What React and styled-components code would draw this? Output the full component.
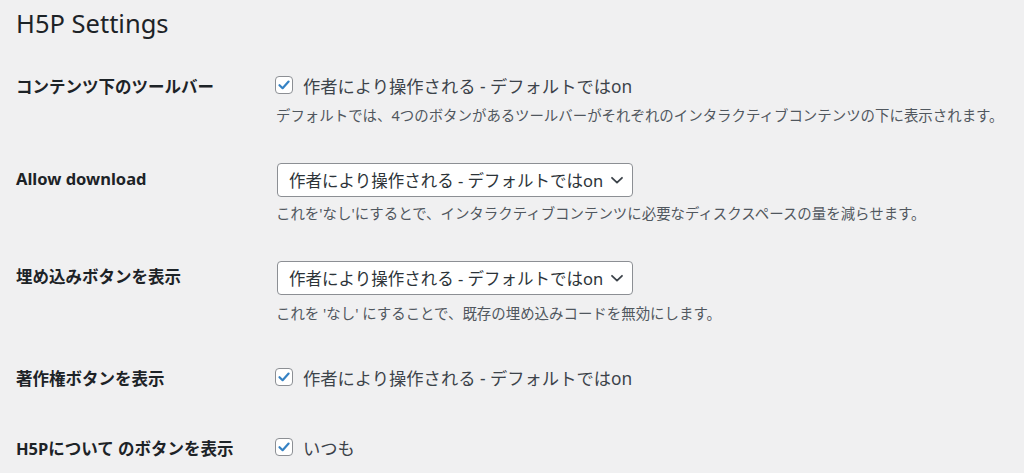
import React from 'react'
import styled, { createGlobalStyle } from 'styled-components'

const GlobalStyle = createGlobalStyle`
  body {
    margin: 0;
    background: #f0f0f1;
    font-family: "Noto Sans", "Noto Sans CJK JP", sans-serif;
    color: #3c434a;
  }
`

const Page = styled.div`
  padding: 0 16px;
`

const Title = styled.h1`
  margin: 6px 0 12px;
  font-size: 25.5px;
  line-height: 34px;
  font-weight: 400;
  color: #1d2327;
`

const Row = styled.div`
  display: grid;
  grid-template-columns: 260px 1fr;
  align-items: start;
  margin-top: ${(p) => p.$shift || 0}px;
`

const Label = styled.div`
  padding: 24px 0;
  font-size: 16.5px;
  line-height: 22px;
  font-weight: 700;
  color: #1d2327;
`

const Field = styled.div`
  padding: 19px 0 18px;
`

const CheckLine = styled.label`
  display: flex;
  align-items: center;
  gap: 10px;
  height: 28px;
  font-size: 17.3px;
  color: #3c434a;
`

const Box = styled.span`
  display: flex;
  align-items: center;
  justify-content: center;
  width: 18px;
  height: 18px;
  box-sizing: border-box;
  border: 1px solid #8c8f94;
  border-radius: 4px;
  background: #fff;
  margin-left: -1px;

  svg {
    width: 14px;
    height: 14px;
  }
`

const Select = styled.div`
  display: flex;
  align-items: center;
  justify-content: space-between;
  box-sizing: border-box;
  width: 356px;
  height: 34px;
  margin-left: 1px;
  padding: 0 8px 0 11px;
  border: 1px solid #8c8f94;
  border-radius: 4px;
  background: #fff;
  font-size: 16.5px;
  color: #2c3338;

  svg {
    width: 14px;
    height: 14px;
  }
`

const Description = styled.p`
  margin: ${(p) => p.$gap || 7}px 0 0;
  font-size: 14.45px;
  line-height: 20px;
  color: #50575e;
`

const OPTION = '作者により操作される - デフォルトではon'

const Checkbox = ({ children }) => (
  <CheckLine>
    <Box>
      <svg viewBox="0 0 14 14" fill="none">
        <path
          d="M2.5 7.2 L5.6 10.2 L11.6 3.6"
          stroke="#3582c4"
          strokeWidth="2.2"
          strokeLinecap="round"
          strokeLinejoin="round"
        />
      </svg>
    </Box>
    {children}
  </CheckLine>
)

const Dropdown = ({ children }) => (
  <Select>
    <span>{children}</span>
    <svg viewBox="0 0 14 14" fill="none">
      <path
        d="M2 4.8 L7 9.6 L12 4.8"
        stroke="#3c434a"
        strokeWidth="1.8"
        strokeLinecap="round"
        strokeLinejoin="round"
      />
    </svg>
  </Select>
)

const App = () => (
  <Page>
    <GlobalStyle />
    <Title>H5P Settings</Title>

    <Row>
      <Label>コンテンツ下のツールバー</Label>
      <Field>
        <Checkbox>{OPTION}</Checkbox>
        <Description>
          デフォルトでは、4つのボタンがあるツールバーがそれぞれのインタラクティブコンテンツの下に表示されます。
        </Description>
      </Field>
    </Row>

    <Row>
      <Label>Allow download</Label>
      <Field>
        <Dropdown>{OPTION}</Dropdown>
        <Description>
          これを'なし'にするとで、インタラクティブコンテンツに必要なディスクスペースの量を減らせます。
        </Description>
      </Field>
    </Row>

    <Row>
      <Label>埋め込みボタンを表示</Label>
      <Field>
        <Dropdown>{OPTION}</Dropdown>
        <Description $gap={9}>
          これを 'なし' にすることで、既存の埋め込みコードを無効にします。
        </Description>
      </Field>
    </Row>

    <Row $shift={2}>
      <Label>著作権ボタンを表示</Label>
      <Field>
        <Checkbox>{OPTION}</Checkbox>
      </Field>
    </Row>

    <Row>
      <Label>H5Pについて のボタンを表示</Label>
      <Field>
        <Checkbox>いつも</Checkbox>
      </Field>
    </Row>
  </Page>
)

export default App
